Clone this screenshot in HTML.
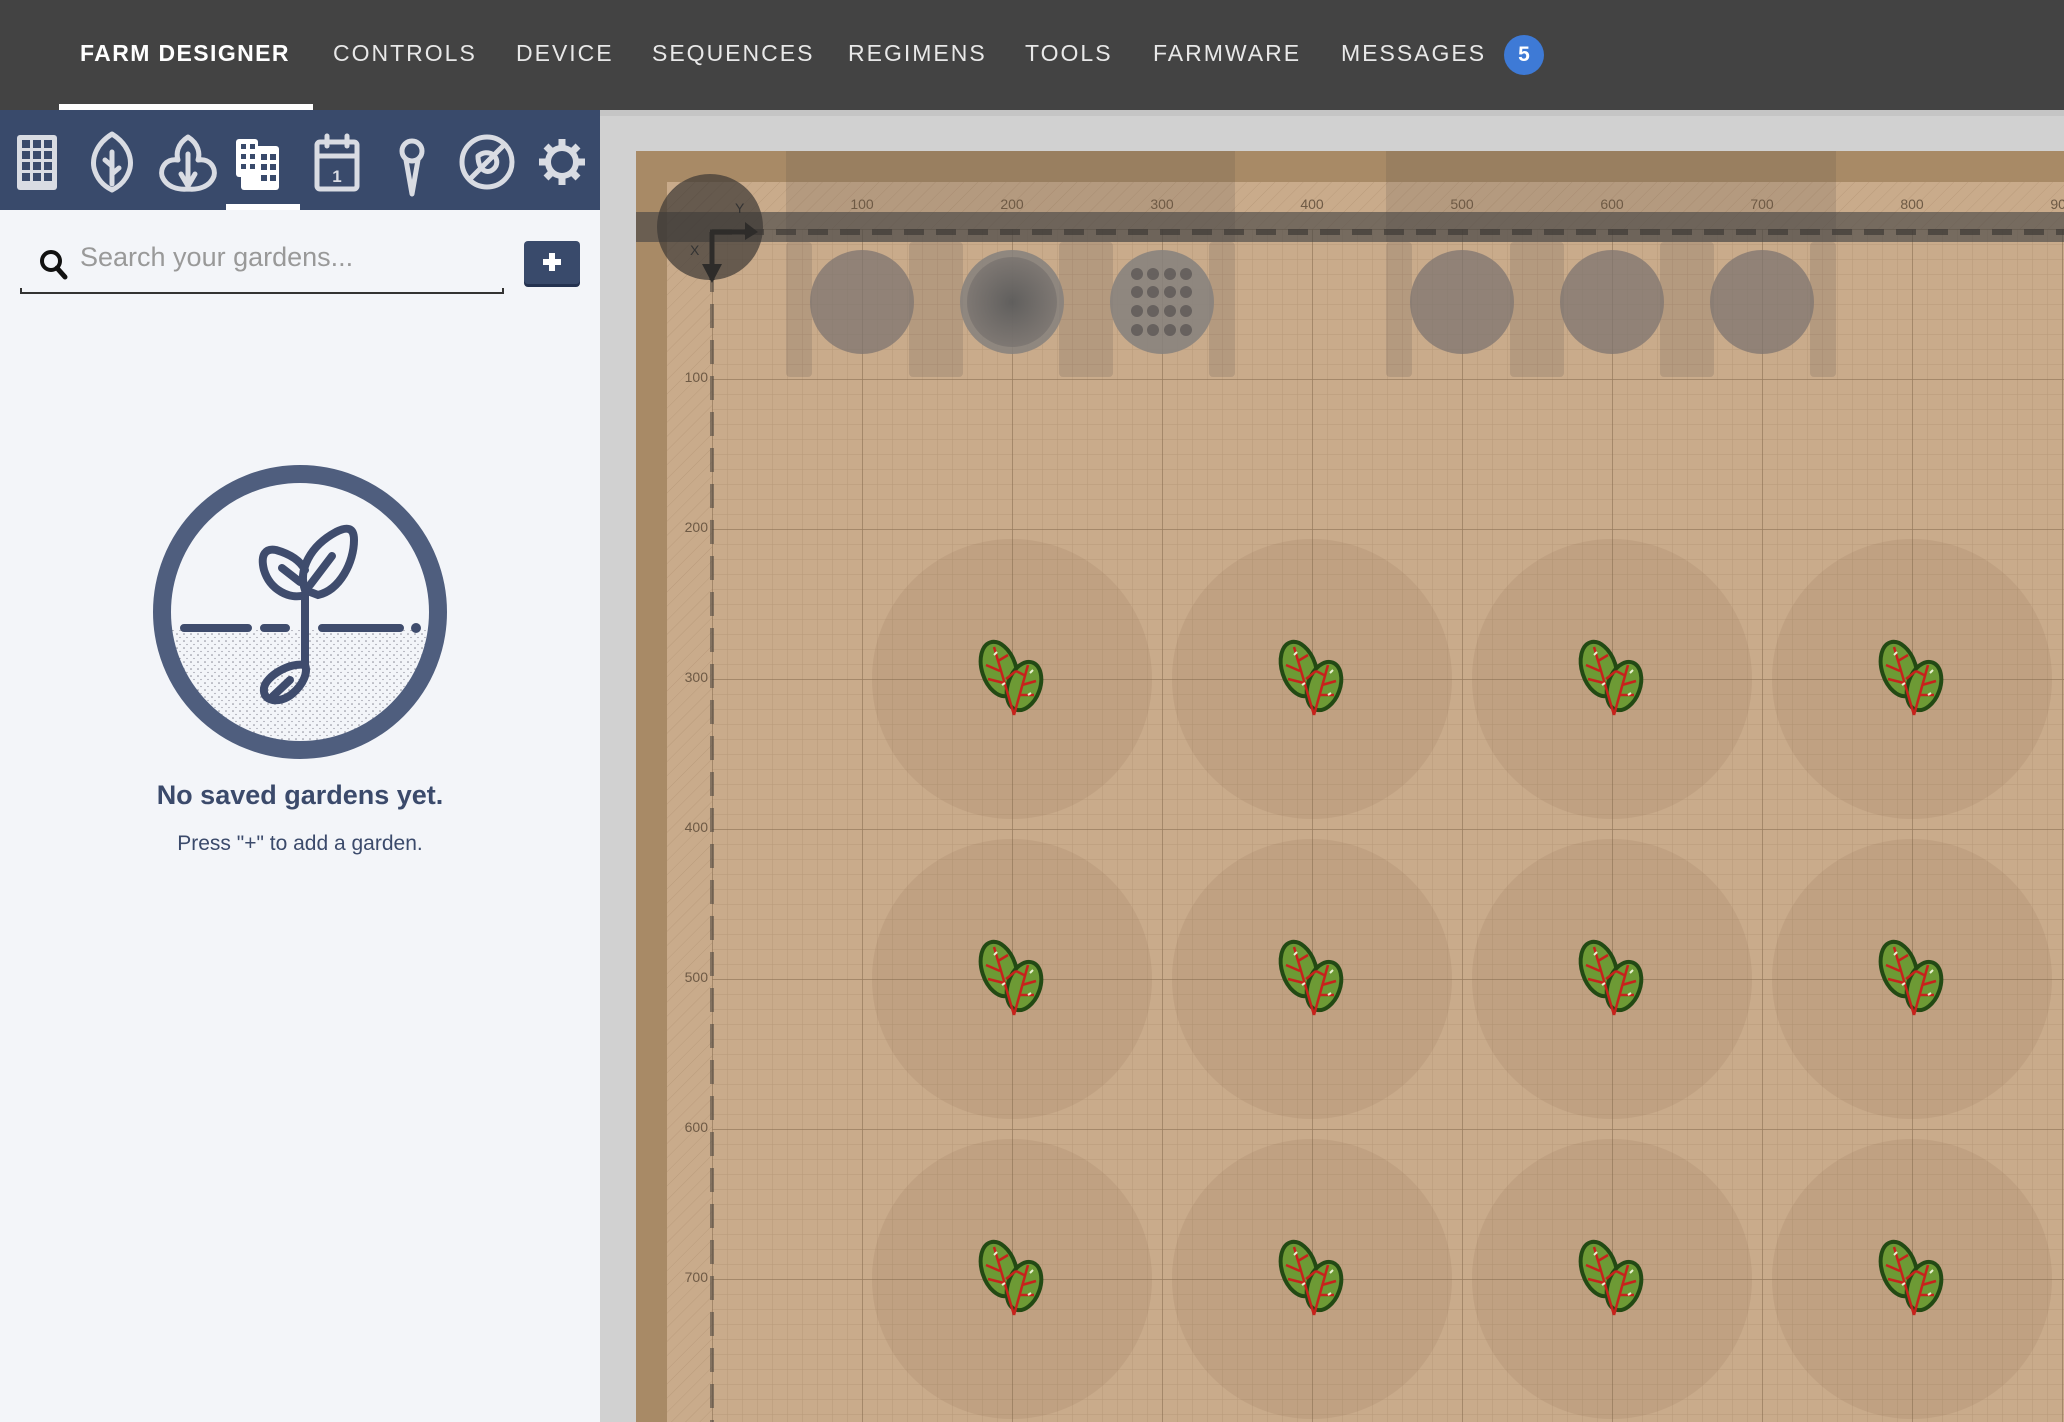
<!DOCTYPE html>
<html><head><meta charset="utf-8"><style>
*{margin:0;padding:0;box-sizing:border-box}
body{width:2064px;height:1422px;overflow:hidden;background:#d1d1d1;font-family:"Liberation Sans",Arial,sans-serif;position:relative}
.nav{position:absolute;left:0;top:0;width:2064px;height:110px;background:#434343}
.nav span{position:absolute;top:40px;font-size:23px;letter-spacing:2px;color:#e8e8e8;white-space:nowrap}
.nav .act{color:#fff;font-weight:bold;letter-spacing:1.4px}
.uline{position:absolute;left:59px;top:104px;width:254px;height:6px;background:#fff}
.badge{position:absolute;left:1504px;top:35px;width:40px;height:40px;border-radius:50%;background:#3e7ad6;color:#fff;font-weight:bold;font-size:21px;text-align:center;line-height:40px}
.side{position:absolute;left:0;top:110px;width:600px;height:1312px;background:#f3f5f9}
.sh{position:absolute;left:0;top:0;width:600px;height:100px;background:#394a6b}
.sh svg{position:absolute}
.sul{position:absolute;left:226px;top:94px;width:74px;height:6px;background:#fff}
.search{position:absolute;left:80px;top:132px;font-size:27px;color:#999}
.sline{position:absolute;left:20px;top:178px;width:484px;border:2px solid #333;border-top:none;height:6px}
.plus{position:absolute;left:524px;top:131px;width:56px;height:43px;background:#394a6b;border-radius:4px;box-shadow:0 3px 0 #243250}
.t1{position:absolute;left:0;width:600px;text-align:center;top:670px;font-size:27px;font-weight:bold;color:#3b4a6b}
.t2{position:absolute;left:0;width:600px;text-align:center;top:722px;font-size:21px;color:#3b4a6b}
</style></head><body>
<div class="nav">
<span class="act" style="left:80px">FARM DESIGNER</span>
<span style="left:333px">CONTROLS</span>
<span style="left:516px">DEVICE</span>
<span style="left:652px">SEQUENCES</span>
<span style="left:848px">REGIMENS</span>
<span style="left:1025px">TOOLS</span>
<span style="left:1153px">FARMWARE</span>
<span style="left:1341px">MESSAGES</span>
<div class="badge">5</div>
<div class="uline"></div>
</div>

<div class="side">
<div class="sh">
<svg width="600" height="100" viewBox="0 0 600 100">
<rect x="17" y="25" width="40" height="55" rx="3" fill="#d9dce3"/>
<g fill="#394a6b">
<rect x="22" y="30" width="8" height="8"/><rect x="33" y="30" width="8" height="8"/><rect x="44" y="30" width="8" height="8"/>
<rect x="22" y="41" width="8" height="8"/><rect x="33" y="41" width="8" height="8"/><rect x="44" y="41" width="8" height="8"/>
<rect x="22" y="52" width="8" height="8"/><rect x="33" y="52" width="8" height="8"/><rect x="44" y="52" width="8" height="8"/>
<rect x="22" y="63" width="8" height="8"/><rect x="33" y="63" width="8" height="8"/><rect x="44" y="63" width="8" height="8"/>
</g>
<g fill="none" stroke="#d9dce3" stroke-width="5" stroke-linecap="round" stroke-linejoin="round">
<path d="M112 24 C96 34 92 48 94 58 C97 70 104 76 112 80 C120 76 127 70 130 58 C132 48 128 34 112 24Z"/>
<path d="M112 42 V74 M112 56 L105 50 M112 64 L119 58"/>
<path d="M188 27 C177 34 176 44 178 50 C166 48 160 58 162 66 C166 77 178 80 188 79 C198 80 210 77 214 66 C216 58 210 48 198 50 C200 44 199 34 188 27Z"/>
<path d="M188 44 V76 M188 76 L181 64 M188 76 L195 64"/>
<rect x="317" y="32" width="40" height="47" rx="3"/>
<path d="M317 46 H357 M327 26 V36 M347 26 V36"/>
<circle cx="412" cy="41" r="10"/>
<path d="M406 50 L412 84 L418 50"/>
<circle cx="487" cy="52" r="25"/>
<path d="M470 69 L504 35 M478 46 C488 38 500 46 496 56 C490 66 478 62 478 46Z"/>
<circle cx="562" cy="52" r="14" stroke-width="6"/>
</g>
<text x="337" y="72" font-size="17" font-weight="bold" fill="#d9dce3" text-anchor="middle" font-family="Liberation Sans">1</text>
<g fill="#fff">
<rect x="241" y="36" width="38" height="44" rx="3"/>
<rect x="236" y="29" width="22" height="38" rx="3"/>
</g>
<g fill="#394a6b">
<rect x="241" y="34" width="5" height="5"/><rect x="250" y="34" width="5" height="5"/>
<rect x="241" y="44" width="5" height="5"/><rect x="250" y="44" width="5" height="5"/><rect x="261" y="44" width="6" height="6"/><rect x="270" y="44" width="6" height="6"/>
<rect x="241" y="54" width="5" height="5"/><rect x="250" y="54" width="5" height="5"/><rect x="261" y="54" width="6" height="6"/><rect x="270" y="54" width="6" height="6"/>
<rect x="261" y="65" width="6" height="6"/><rect x="270" y="65" width="6" height="6"/>
</g>
<g stroke="#d9dce3" stroke-width="7" stroke-linecap="butt">
<path d="M562 29 V37 M562 67 V75 M539 52 H547 M577 52 H585 M546 36 L551 41 M573 63 L578 68 M578 36 L573 41 M546 68 L551 63"/>
</g>
</svg>
<div class="sul"></div>
</div>
<svg style="position:absolute;left:38px;top:138px" width="32" height="34" viewBox="0 0 32 34"><circle cx="13" cy="13" r="9" fill="none" stroke="#111" stroke-width="4"/><path d="M19 20 L27 29" stroke="#111" stroke-width="5" stroke-linecap="round"/></svg>
<div class="search">Search your gardens...</div>
<div class="sline"></div>
<div class="plus"><svg width="56" height="43"><path d="M28 12 V30 M19 21 H37" stroke="#fff" stroke-width="6"/></svg></div>
<svg style="position:absolute;left:140px;top:340px" width="320" height="320" viewBox="0 0 320 320">
<defs><clipPath id="c"><rect x="0" y="180" width="320" height="140"/></clipPath>
<pattern id="st" width="7" height="7" patternUnits="userSpaceOnUse"><circle cx="2" cy="2" r="0.8" fill="#556"/><circle cx="5" cy="5.5" r="0.6" fill="#556"/></pattern></defs>
<circle cx="160" cy="162" r="134" fill="url(#st)" clip-path="url(#c)" opacity="0.7"/>
<circle cx="160" cy="162" r="138" fill="none" stroke="#4f5e7e" stroke-width="18"/>
<g stroke="#3f4c6d" stroke-width="8" stroke-linecap="round" fill="none">
<path d="M44 178 H108 M124 178 H146 M182 178 H260"/>
<path d="M165 145 V215"/>
<path d="M165 215 C150 212 126 226 124 238 C122 252 140 254 152 244 C164 234 168 222 165 215Z"/>
<path d="M133 246 L150 230"/>
<path d="M165 145 C150 150 130 140 124 120 C120 104 126 98 136 100 C150 104 160 110 165 120"/>
<path d="M165 140 C158 120 170 96 196 82 C208 76 214 78 214 90 C214 112 200 140 178 145 Z"/>
<path d="M170 135 L192 106 M160 132 L142 118"/>
</g>
<circle cx="276" cy="178" r="5" fill="#3f4c6d"/>
</svg>
<div class="t1">No saved gardens yet.</div>
<div class="t2">Press "+" to add a garden.</div>
</div>

<svg style="position:absolute;left:0;top:0" width="2064" height="1422" viewBox="0 0 2064 1422">
<defs>
<pattern id="minor" x="712" y="229" width="15" height="15" patternUnits="userSpaceOnUse"><path d="M0 0 H15 M0 0 V15" stroke="#8a6c4e" stroke-opacity="0.28" stroke-width="1" fill="none"/></pattern>
<pattern id="major" x="712" y="229" width="150" height="150" patternUnits="userSpaceOnUse"><path d="M0 0 H150 M0 0 V150" stroke="#6b5238" stroke-opacity="0.45" stroke-width="1.5" fill="none"/></pattern>
<pattern id="hatch" width="10" height="10" patternUnits="userSpaceOnUse" patternTransform="rotate(45)"><path d="M0 0 V10" stroke="#9c7e5e" stroke-opacity="0.35" stroke-width="1"/></pattern>
<radialGradient id="rg"><stop offset="0" stop-color="#555"/><stop offset="1" stop-color="#7a7470"/></radialGradient>
<g id="pl">
<g transform="translate(0 6)">
<ellipse cx="-13" cy="-16" rx="17" ry="28" transform="rotate(-18 -13 -16)" fill="#6d9a35" stroke="#234a14" stroke-width="4"/>
<ellipse cx="12" cy="1" rx="16" ry="25" transform="rotate(20 12 1)" fill="#6d9a35" stroke="#234a14" stroke-width="4"/>
<path d="M2 30 L-18 -38 M2 30 L16 -20 M-8 -2 L-24 -6 M-12 -14 L-26 -20 M-14 -24 L-4 -30 M-6 -6 L4 -14 M10 0 L24 -4 M8 10 L22 10 M12 -10 L4 -14" stroke="#c8221c" stroke-width="2.5" fill="none"/>
<path d="M-18 -30 l3 -3 M-10 0 l3 -2 M18 -12 l3 -3 M16 10 l3 -2" stroke="#e8f0d0" stroke-width="2" fill="none"/>
</g>
</g>
</defs>
<rect x="600" y="110" width="1464" height="1312" fill="#d1d1d1"/>
<rect x="636" y="151" width="1428" height="1271" fill="#a88a66"/>
<rect x="667" y="182" width="1397" height="1240" fill="#c9ab8b"/>
<rect x="667" y="182" width="1397" height="47" fill="url(#hatch)"/>
<rect x="667" y="182" width="45" height="1240" fill="url(#hatch)"/>
<rect x="712" y="229" width="1352" height="1193" fill="url(#minor)"/>
<rect x="712" y="229" width="1352" height="1193" fill="url(#major)"/>
<g fill="#5a5048" fill-opacity="0.18">
<rect x="786" y="151" width="449" height="31"/><rect x="1386" y="151" width="450" height="31"/>
<rect x="786" y="182" width="449" height="60"/><rect x="1386" y="182" width="450" height="60"/>
<rect x="786" y="242" width="26" height="135" rx="4"/><rect x="909" y="242" width="54" height="135" rx="4"/><rect x="1059" y="242" width="54" height="135" rx="4"/><rect x="1209" y="242" width="26" height="135" rx="4"/>
<rect x="1386" y="242" width="26" height="135" rx="4"/><rect x="1510" y="242" width="54" height="135" rx="4"/><rect x="1660" y="242" width="54" height="135" rx="4"/><rect x="1810" y="242" width="26" height="135" rx="4"/>
</g>
<g fill="#8a6c50" fill-opacity="0.15">
<circle cx="1012" cy="679" r="140"/><circle cx="1312" cy="679" r="140"/><circle cx="1612" cy="679" r="140"/><circle cx="1912" cy="679" r="140"/>
<circle cx="1012" cy="979" r="140"/><circle cx="1312" cy="979" r="140"/><circle cx="1612" cy="979" r="140"/><circle cx="1912" cy="979" r="140"/>
<circle cx="1012" cy="1279" r="140"/><circle cx="1312" cy="1279" r="140"/><circle cx="1612" cy="1279" r="140"/><circle cx="1912" cy="1279" r="140"/>
</g>
<rect x="636" y="212" width="1428" height="30" fill="#444" fill-opacity="0.62"/>
<path d="M712 232 H2064" stroke="#3e3a36" stroke-width="6" stroke-opacity="0.7" stroke-dasharray="20 12"/>
<path d="M712 232 V1422" stroke="#3e3a36" stroke-width="4" stroke-opacity="0.5" stroke-dasharray="24 12"/>
<circle cx="862" cy="302" r="52" fill="#7d7470" fill-opacity="0.75"/>
<circle cx="1012" cy="302" r="52" fill="#85807c" fill-opacity="0.85"/><circle cx="1012" cy="302" r="45" fill="url(#rg)" fill-opacity="0.8"/>
<circle cx="1162" cy="302" r="52" fill="#85807c" fill-opacity="0.85"/>
<g fill="#5c5856" fill-opacity="0.8">
<circle cx="1137" cy="274" r="6"/><circle cx="1153" cy="274" r="6"/><circle cx="1170" cy="274" r="6"/><circle cx="1186" cy="274" r="6"/>
<circle cx="1137" cy="292" r="6"/><circle cx="1153" cy="292" r="6"/><circle cx="1170" cy="292" r="6"/><circle cx="1186" cy="292" r="6"/>
<circle cx="1137" cy="311" r="6"/><circle cx="1153" cy="311" r="6"/><circle cx="1170" cy="311" r="6"/><circle cx="1186" cy="311" r="6"/>
<circle cx="1137" cy="330" r="6"/><circle cx="1153" cy="330" r="6"/><circle cx="1170" cy="330" r="6"/><circle cx="1186" cy="330" r="6"/>
</g>
<circle cx="1462" cy="302" r="52" fill="#7d7470" fill-opacity="0.75"/>
<circle cx="1612" cy="302" r="52" fill="#7d7470" fill-opacity="0.75"/>
<circle cx="1762" cy="302" r="52" fill="#7d7470" fill-opacity="0.75"/>
<circle cx="710" cy="227" r="53" fill="#3c3834" fill-opacity="0.7"/>
<path d="M710 232 H745 M712 232 V280" stroke="#2e2c2a" stroke-width="5"/>
<path d="M745 222 L758 232 L745 240Z M702 264 L712 283 L722 264Z" fill="#2e2c2a"/>
<text x="735" y="213" font-size="14" fill="#333" font-family="Liberation Sans">Y</text>
<text x="690" y="255" font-size="14" fill="#333" font-family="Liberation Sans">X</text>
<g font-family="Liberation Sans" font-size="14" fill="#6e5a45" text-anchor="middle">
<text x="862" y="209">100</text><text x="1012" y="209">200</text><text x="1162" y="209">300</text><text x="1312" y="209">400</text><text x="1462" y="209">500</text><text x="1612" y="209">600</text><text x="1762" y="209">700</text><text x="1912" y="209">800</text><text x="2062" y="209">900</text>
</g>
<g font-family="Liberation Sans" font-size="14" fill="#6e5a45" text-anchor="end">
<text x="708" y="382">100</text><text x="708" y="532">200</text><text x="708" y="682">300</text><text x="708" y="832">400</text><text x="708" y="982">500</text><text x="708" y="1132">600</text><text x="708" y="1282">700</text>
</g>
<g>
<use href="#pl" x="1012" y="679"/><use href="#pl" x="1312" y="679"/><use href="#pl" x="1612" y="679"/><use href="#pl" x="1912" y="679"/>
<use href="#pl" x="1012" y="979"/><use href="#pl" x="1312" y="979"/><use href="#pl" x="1612" y="979"/><use href="#pl" x="1912" y="979"/>
<use href="#pl" x="1012" y="1279"/><use href="#pl" x="1312" y="1279"/><use href="#pl" x="1612" y="1279"/><use href="#pl" x="1912" y="1279"/>
</g>
<rect x="600" y="110" width="1464" height="6" fill="#bdbdbd" fill-opacity="0.6"/>
</svg>
</body></html>
